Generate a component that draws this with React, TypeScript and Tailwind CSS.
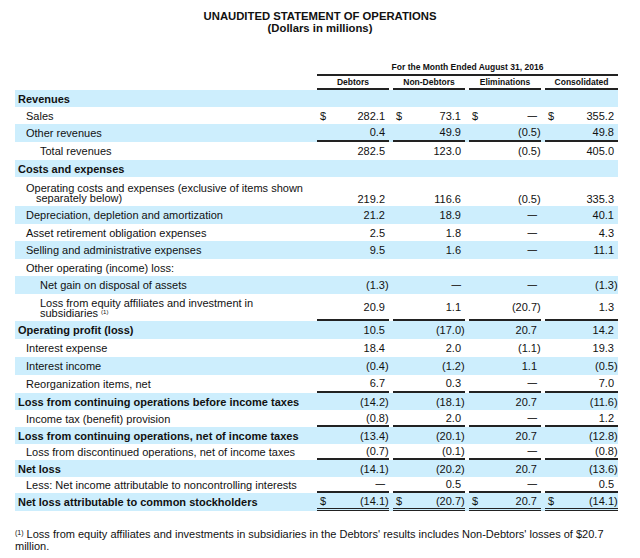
type Row = {
  label: string;
  sub?: string;
  lvl: 0 | 1 | 2;
  bold?: boolean;
  h: string;
  v?: string[];
  dollar?: boolean;
  line?: "single" | "double";
  tall?: boolean;
};

const rows: Row[] = [
  { label: "Revenues", lvl: 0, bold: true, h: "h-[17px]" },
  { label: "Sales", lvl: 1, h: "h-[17px]", v: ["282.1", "73.1", "—", "355.2"], dollar: true },
  { label: "Other revenues", lvl: 1, h: "h-[18px]", v: ["0.4", "49.9", "(0.5)", "49.8"], line: "single" },
  { label: "Total revenues", lvl: 2, h: "h-[18px]", v: ["282.5", "123.0", "(0.5)", "405.0"] },
  { label: "Costs and expenses", lvl: 0, bold: true, h: "h-[17px]" },
  {
    label: "Operating costs and expenses (exclusive of items shown separately below)",
    lvl: 1,
    h: "h-[29px]",
    tall: true,
    v: ["219.2", "116.6", "(0.5)", "335.3"],
  },
  { label: "Depreciation, depletion and amortization", lvl: 1, h: "h-[18px]", v: ["21.2", "18.9", "—", "40.1"] },
  { label: "Asset retirement obligation expenses", lvl: 1, h: "h-[17px]", v: ["2.5", "1.8", "—", "4.3"] },
  { label: "Selling and administrative expenses", lvl: 1, h: "h-[18px]", v: ["9.5", "1.6", "—", "11.1"] },
  { label: "Other operating (income) loss:", lvl: 1, h: "h-[17px]" },
  { label: "Net gain on disposal of assets", lvl: 2, h: "h-[18px]", v: ["(1.3)", "—", "—", "(1.3)"] },
  {
    label: "Loss from equity affiliates and investment in subsidiaries",
    sub: "(1)",
    lvl: 2,
    h: "h-[27px]",
    tall: true,
    v: ["20.9", "1.1", "(20.7)", "1.3"],
    line: "single",
  },
  { label: "Operating profit (loss)", lvl: 0, bold: true, h: "h-[18px]", v: ["10.5", "(17.0)", "20.7", "14.2"] },
  { label: "Interest expense", lvl: 1, h: "h-[18px]", v: ["18.4", "2.0", "(1.1)", "19.3"] },
  { label: "Interest income", lvl: 1, h: "h-[18px]", v: ["(0.4)", "(1.2)", "1.1", "(0.5)"] },
  { label: "Reorganization items, net", lvl: 1, h: "h-[18px]", v: ["6.7", "0.3", "—", "7.0"], line: "single" },
  {
    label: "Loss from continuing operations before income taxes",
    lvl: 0,
    bold: true,
    h: "h-[17px]",
    v: ["(14.2)", "(18.1)", "20.7", "(11.6)"],
  },
  { label: "Income tax (benefit) provision", lvl: 1, h: "h-[17px]", v: ["(0.8)", "2.0", "—", "1.2"], line: "single" },
  {
    label: "Loss from continuing operations, net of income taxes",
    lvl: 0,
    bold: true,
    h: "h-[17px]",
    v: ["(13.4)", "(20.1)", "20.7", "(12.8)"],
  },
  {
    label: "Loss from discontinued operations, net of income taxes",
    lvl: 1,
    h: "h-[16px]",
    v: ["(0.7)", "(0.1)", "—", "(0.8)"],
    line: "single",
  },
  { label: "Net loss", lvl: 0, bold: true, h: "h-[17px]", v: ["(14.1)", "(20.2)", "20.7", "(13.6)"] },
  {
    label: "Less: Net income attributable to noncontrolling interests",
    lvl: 1,
    h: "h-[16px]",
    v: ["—", "0.5", "—", "0.5"],
    line: "single",
  },
  {
    label: "Net loss attributable to common stockholders",
    lvl: 0,
    bold: true,
    h: "h-[18px]",
    v: ["(14.1)", "(20.7)", "20.7", "(14.1)"],
    dollar: true,
    line: "double",
  },
];

const cols = "grid grid-cols-[298px_72px_72px_72px_73px] gap-x-[4px]";
const indent = ["pl-[3px]", "pl-[11px]", "pl-[25px]"];

function Value({ v, dollar, line, tall }: { v: string; dollar?: boolean; line?: Row["line"]; tall?: boolean }) {
  const neg = v.startsWith("(");
  const num = neg ? v.slice(0, -1) : v;
  return (
    <div
      className={[
        "flex justify-between pl-[3px]",
        tall ? "items-end pb-[1px]" : "items-center",
        line === "single" ? "border-b-2 border-[#222]" : "",
        line === "double" ? "border-b-[3px] border-double border-[#222]" : "",
      ].join(" ")}
    >
      <span>{dollar ? "$" : ""}</span>
      <span className="flex items-center">
        {num === "—" ? (
          <span className="text-[9.5px] leading-[12px] font-bold text-[#333]">—</span>
        ) : (
          <span>{num}</span>
        )}
        <span className="w-[4px]">{neg ? ")" : ""}</span>
      </span>
    </div>
  );
}

export default function App() {
  return (
    <div className="w-[640px] h-[558px] bg-white text-[#111] font-['Liberation_Sans',Arial,sans-serif] overflow-hidden">
      <div className="pt-[10px] text-center text-[11.3px] font-bold leading-[12px]">
        <div>UNAUDITED STATEMENT OF OPERATIONS</div>
        <div>(Dollars in millions)</div>
      </div>

      <div className="mt-[26px] ml-[15px] w-[603px] text-[11px] leading-[12px]">
        <div className={cols}>
          <div />
          <div className="col-span-4 h-[16px] flex items-end pb-[1px] justify-center border-b-2 border-[#222] text-[8.5px] font-bold">
            For the Month Ended August 31, 2016
          </div>
        </div>
        <div className={cols}>
          <div />
          {["Debtors", "Non-Debtors", "Eliminations", "Consolidated"].map((c) => (
            <div key={c} className="h-[14px] flex items-center justify-center border-b-2 border-[#222] text-[8.5px] font-bold">
              {c}
            </div>
          ))}
        </div>

        {rows.map((r, i) => (
          <div key={r.label} className={[cols, r.h, i % 2 === 0 ? "bg-[#cdeefd]" : "bg-white"].join(" ")}>
            <div
              className={[
                "flex",
                r.tall ? "items-end pb-[3px] leading-[10px]" : "items-center",
                r.bold ? "font-bold" : "",
              ].join(" ")}
            >
              {r.tall && r.lvl === 1 ? (
                <div className="pl-[21px] -indent-[10px]">{r.label}</div>
              ) : (
                <div className={indent[r.lvl]}>
                  {r.label}
                  {r.sub && (
                    <span className="relative -top-[3px] ml-[3px] text-[6px] leading-none">{r.sub}</span>
                  )}
                </div>
              )}
            </div>
            {r.v
              ? r.v.map((v, j) => (
                  <Value key={j} v={v} dollar={r.dollar} line={r.line} tall={r.tall && r.line !== "single"} />
                ))
              : [0, 1, 2, 3].map((j) => <div key={j} />)}
          </div>
        ))}

        <p className="mt-[17px] w-[608px] leading-[12px]">
          <span className="relative -top-[3px] text-[7px] leading-none">(1)</span> Loss from equity affiliates and
          investments in subsidiaries in the Debtors' results includes Non-Debtors' losses of $20.7 million.
        </p>
      </div>
    </div>
  );
}
